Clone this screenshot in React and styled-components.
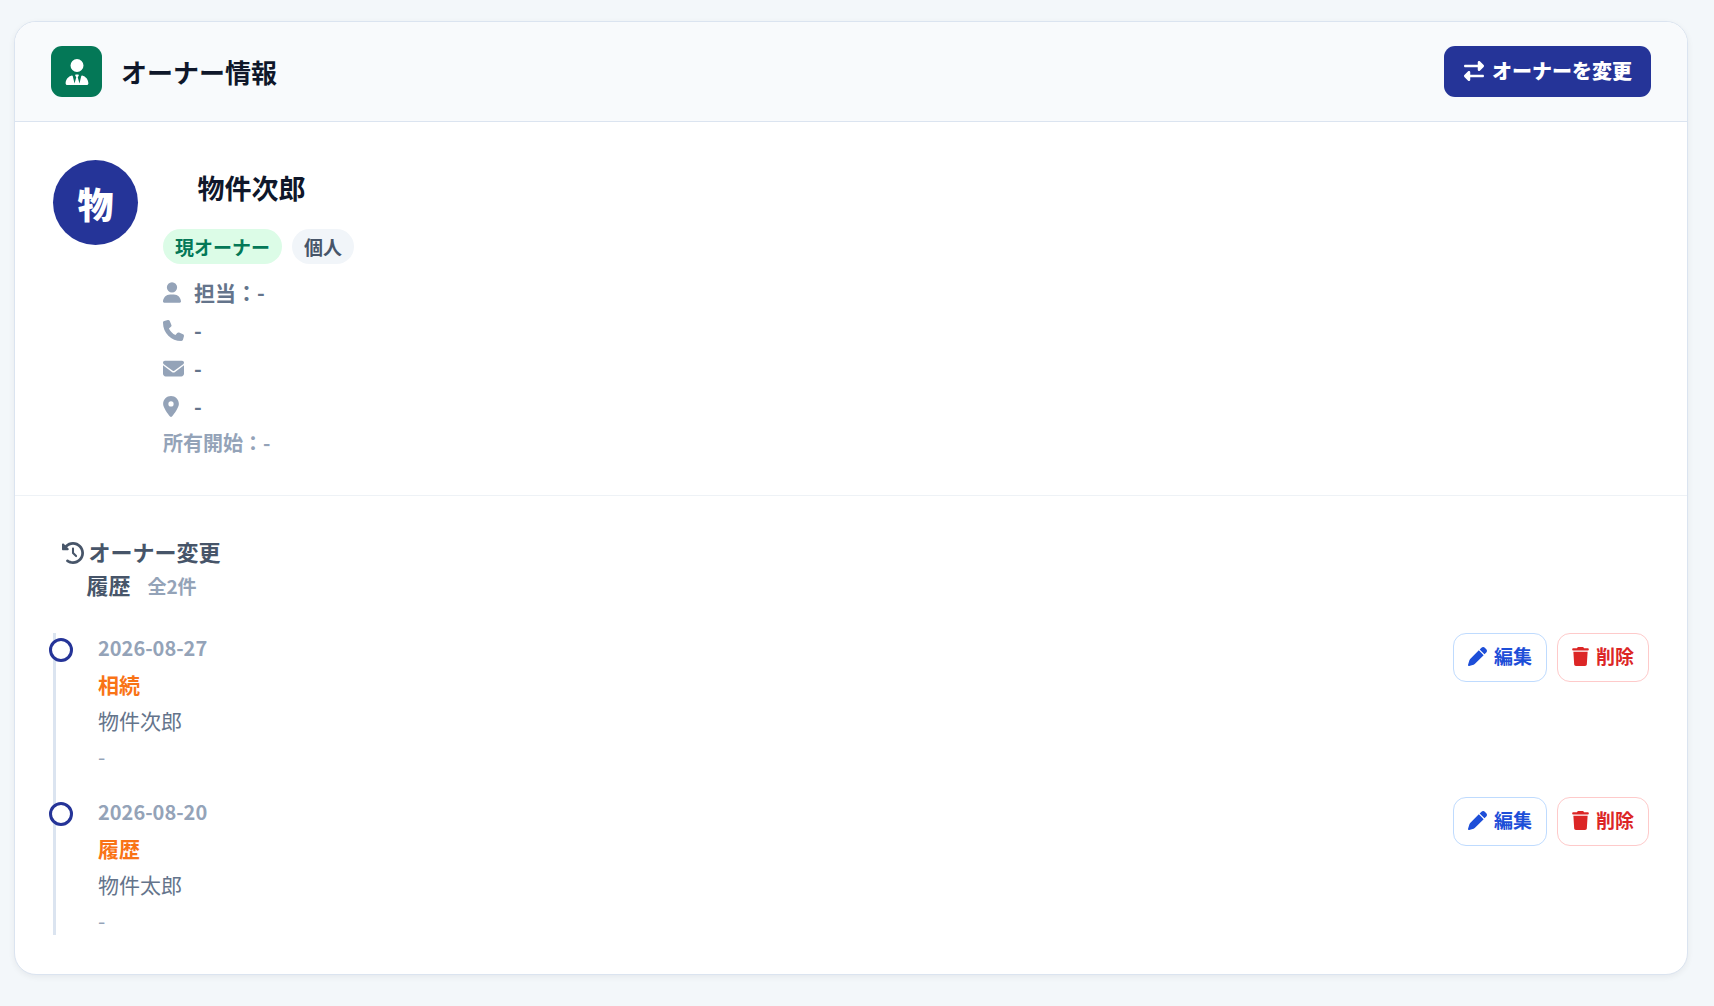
import React from 'react';
import styled, { createGlobalStyle, ThemeProvider } from 'styled-components';
import {
  FaUserTie,
  FaUser,
  FaPhone,
  FaEnvelope,
  FaLocationDot,
  FaClockRotateLeft,
  FaPen,
  FaTrash,
  FaRightLeft,
} from 'react-icons/fa6';

const theme = {
  primary: '#253498',
  green: '#047857',
  page: '#f3f7fa',
  line: '#dbe4f0',
  ink: '#0f172a',
  slate: '#475569',
  text: '#64748b',
  muted: '#94a3b8',
  orange: '#f97316',
};

const tones = {
  current: { color: '#047857', background: '#dcfce7' },
  plain: { color: '#475569', background: '#f1f5f9' },
  edit: { color: '#1d4ed8', border: '#bfdbfe', icon: 19 },
  remove: { color: '#dc2626', border: '#fecaca', icon: 17 },
};

const GlobalStyle = createGlobalStyle`
  *, *::before, *::after {
    box-sizing: border-box;
  }
  body {
    margin: 0;
    background: ${theme.page};
    font-family: "Noto Sans CJK JP", "Noto Sans", sans-serif;
    font-size: 21px;
    line-height: 30px;
    color: ${theme.ink};
  }
  h2, h3, p, ul, ol {
    margin: 0;
    padding: 0;
    list-style: none;
  }
  button {
    font-family: inherit;
    cursor: pointer;
  }
  svg {
    flex: none;
  }
`;

const Page = styled.main`
  padding: 21px 26px 32px 14px;
`;

const Card = styled.section`
  overflow: hidden;
  background: #fff;
  border: 1px solid ${(props) => props.theme.line};
  border-radius: 22px;
  box-shadow: 0 2px 6px rgba(15, 23, 42, 0.06);
`;

const CardHeader = styled.header`
  display: flex;
  align-items: center;
  justify-content: space-between;
  padding: 24px 36px;
  background: #f8fafc;
  border-bottom: 1px solid ${(props) => props.theme.line};
`;

const TitleGroup = styled.div`
  display: flex;
  align-items: center;
  gap: 19px;
`;

const TitleIcon = styled.span`
  display: flex;
  align-items: center;
  justify-content: center;
  width: 51px;
  height: 51px;
  border-radius: 11px;
  background: ${(props) => props.theme.green};
  color: #fff;
  font-size: 26px;
`;

const Title = styled.h2`
  font-size: 26px;
  line-height: 39px;
  font-weight: 700;
`;

const ChangeButton = styled.button`
  display: flex;
  align-items: center;
  gap: 8px;
  height: 51px;
  padding: 0 19px 2px 20px;
  border: 0;
  border-radius: 11px;
  background: ${(props) => props.theme.primary};
  color: #fff;
  font-size: 20px;
  line-height: 30px;
  font-weight: 900;
`;

const OwnerSection = styled.section`
  display: flex;
  align-items: flex-start;
  gap: 25px;
  padding: 38px 38px 37px;
  border-bottom: 1px solid #eef2f6;
`;

const Avatar = styled.div`
  display: flex;
  align-items: center;
  justify-content: center;
  width: 85px;
  height: 85px;
  border-radius: 50%;
  background: ${(props) => props.theme.primary};
  color: #fff;
  font-size: 36px;
  line-height: 54px;
  font-weight: 900;
`;

const OwnerName = styled.h3`
  width: 177px;
  padding: 7px 0 9px;
  font-size: 27px;
  line-height: 41px;
  font-weight: 700;
  text-align: center;
`;

const Badges = styled.div`
  display: flex;
  gap: 10px;
  margin: 12px 0 13px;
`;

const Badge = styled.span`
  padding: 4px 12px 3px;
  border-radius: 18px;
  font-size: 19px;
  line-height: 28px;
  font-weight: 700;
  color: ${(props) => tones[props.$tone].color};
  background: ${(props) => tones[props.$tone].background};
`;

const Contacts = styled.ul`
  display: grid;
  gap: 8px;
`;

const Contact = styled.li`
  display: grid;
  grid-template-columns: 21px 1fr;
  align-items: center;
  gap: 10px;
  font-weight: 700;
  color: ${(props) => props.theme.text};
  svg {
    width: ${(props) => props.$iconWidth}px;
    color: ${(props) => props.theme.muted};
  }
`;

const Since = styled.p`
  margin-top: 7px;
  font-size: 20px;
  font-weight: 700;
  color: ${(props) => props.theme.muted};
`;

const HistorySection = styled.section`
  padding: 39px 38px;
`;

const HistoryTitle = styled.h3`
  width: 177px;
  margin-bottom: 31px;
  font-size: 22px;
  line-height: 33px;
  font-weight: 700;
  text-align: center;
  color: ${(props) => props.theme.slate};
  svg {
    margin-right: 4px;
    vertical-align: -3px;
  }
`;

const Count = styled.span`
  margin-left: 17px;
  font-size: 19px;
  color: ${(props) => props.theme.muted};
`;

const Timeline = styled.ol`
  display: grid;
  gap: 26px;
  padding-left: 42px;
  border-left: 3px solid ${(props) => props.theme.line};
`;

const Entry = styled.li`
  position: relative;
  display: flex;
  align-items: flex-start;
  justify-content: space-between;
  &::before {
    content: "";
    position: absolute;
    top: 5px;
    left: -49px;
    width: 24px;
    height: 24px;
    border: 3px solid ${(props) => props.theme.primary};
    border-radius: 50%;
    background: #fff;
  }
`;

const EntryBody = styled.div`
  display: grid;
  gap: 6px;
  color: ${(props) => props.theme.text};
`;

const EntryDate = styled.time`
  font-size: 20px;
  font-weight: 700;
  color: ${(props) => props.theme.muted};
`;

const Reason = styled.p`
  font-weight: 700;
  color: ${(props) => props.theme.orange};
`;

const Note = styled.p`
  color: ${(props) => props.theme.muted};
`;

const Actions = styled.div`
  display: flex;
  gap: 10px;
`;

const ActionButton = styled.button`
  display: flex;
  align-items: center;
  gap: 7px;
  height: 49px;
  padding: 0 14px 3px;
  border: 1px solid ${(props) => tones[props.$tone].border};
  border-radius: 13px;
  background: #fff;
  color: ${(props) => tones[props.$tone].color};
  font-size: 19px;
  line-height: 28px;
  font-weight: 700;
  svg {
    width: ${(props) => tones[props.$tone].icon}px;
  }
`;

const contacts = [
  { Icon: FaUser, width: 18, text: '担当：-' },
  { Icon: FaPhone, width: 21, text: '-' },
  { Icon: FaEnvelope, width: 21, text: '-' },
  { Icon: FaLocationDot, width: 16, text: '-' },
];

const history = [
  { date: '2026-08-27', reason: '相続', owner: '物件次郎', note: '-' },
  { date: '2026-08-20', reason: '履歴', owner: '物件太郎', note: '-' },
];

function HistoryEntry(props) {
  const { date, reason, owner, note } = props;
  return (
    <Entry>
      <EntryBody>
        <EntryDate dateTime={date}>{date}</EntryDate>
        <Reason>{reason}</Reason>
        <p>{owner}</p>
        <Note>{note}</Note>
      </EntryBody>
      <Actions>
        <ActionButton type="button" $tone="edit">
          <FaPen />
          編集
        </ActionButton>
        <ActionButton type="button" $tone="remove">
          <FaTrash />
          削除
        </ActionButton>
      </Actions>
    </Entry>
  );
}

function App() {
  return (
    <ThemeProvider theme={theme}>
      <GlobalStyle />
      <Page>
        <Card>
          <CardHeader>
            <TitleGroup>
              <TitleIcon><FaUserTie /></TitleIcon>
              <Title>オーナー情報</Title>
            </TitleGroup>
            <ChangeButton type="button">
              <FaRightLeft />
              オーナーを変更
            </ChangeButton>
          </CardHeader>
          <OwnerSection>
            <Avatar>物</Avatar>
            <div>
              <OwnerName>物件次郎</OwnerName>
              <Badges>
                <Badge $tone="current">現オーナー</Badge>
                <Badge $tone="plain">個人</Badge>
              </Badges>
              <Contacts>
                {contacts.map(({ Icon, width, text }, i) => (
                  <Contact key={i} $iconWidth={width}>
                    <Icon />
                    {text}
                  </Contact>
                ))}
              </Contacts>
              <Since>所有開始：-</Since>
            </div>
          </OwnerSection>
          <HistorySection>
            <HistoryTitle>
              <FaClockRotateLeft />
              オーナー変更
              <wbr />
              履歴
              <Count>全2件</Count>
            </HistoryTitle>
            <Timeline>
              {history.map((item) => (
                <HistoryEntry key={item.date} {...item} />
              ))}
            </Timeline>
          </HistorySection>
        </Card>
      </Page>
    </ThemeProvider>
  );
}

export default App;
